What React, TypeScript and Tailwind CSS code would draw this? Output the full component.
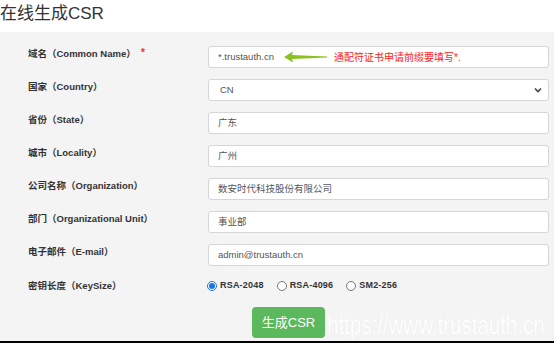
import { useState } from "react";

const LATIN = "font-['Liberation_Sans','Noto_Sans_CJK_SC',sans-serif]";

type Field = {
  label: string;
  value: string;
  kind?: "select";
  required?: boolean;
  hint?: boolean;
};

const fields: Field[] = [
  { label: "域名（Common Name）", value: "*.trustauth.cn", required: true, hint: true },
  { label: "国家（Country）", value: "CN", kind: "select" },
  { label: "省份（State）", value: "广东" },
  { label: "城市（Locality）", value: "广州" },
  { label: "公司名称（Organization）", value: "数安时代科技股份有限公司" },
  { label: "部门（Organizational Unit）", value: "事业部" },
  { label: "电子邮件（E-mail）", value: "admin@trustauth.cn" },
];

function Arrow() {
  return (
    <svg width="44" height="12" viewBox="0 0 44 12" className="shrink-0">
      <path d="M0 6 L9 0.5 L8 4 L43 5.6 L43 6.4 L8 8 L9 11.5 Z" fill="#8cc21f" />
    </svg>
  );
}

function Chevron() {
  return (
    <svg width="8" height="6" viewBox="0 0 8 6">
      <path d="M1 1.5 L4 4.5 L7 1.5" stroke="#444" strokeWidth="1.6" fill="none" />
    </svg>
  );
}

function Radio({ checked, label, onPick }: { checked: boolean; label: string; onPick: () => void }) {
  return (
    <button type="button" onClick={onPick} className="flex items-center gap-[3px]">
      {checked ? (
        <span className="flex h-[10px] w-[10px] items-center justify-center rounded-full border border-[#1a73e8] bg-white">
          <span className="h-[6px] w-[6px] rounded-full bg-[#1a73e8]" />
        </span>
      ) : (
        <span className="h-[10px] w-[10px] rounded-full border border-[#777] bg-white" />
      )}
      <span className="text-[9px] font-bold tracking-[0.2px] text-[#333]">{label}</span>
    </button>
  );
}

export default function App() {
  const [keySize, setKeySize] = useState("RSA-2048");

  return (
    <div className={`h-[343px] w-[554px] overflow-hidden bg-white ${LATIN}`}>
      <h1 className="h-[32px] pt-[2px] text-[17px] leading-[24px] text-[#333]">在线生成CSR</h1>

      <div className="flex h-[309px] flex-col bg-[#f4f4f4] pt-[14px]">
        <div className="flex flex-col gap-[11px]">
          {fields.map((f) => (
            <div key={f.label} className="flex h-[22px] items-start">
              <div className="flex w-[208px] items-start pl-[28px] pt-[1px] text-[9.5px] font-bold leading-[13px] text-[#333]">
                <span>{f.label}</span>
                {f.required ? <span className="ml-[5px] -mt-[1px] text-[11px] text-[#e4393c]">*</span> : null}
              </div>
              <div className="relative flex h-[22px] w-[341px] items-center rounded-[3px] border border-[#d6d6d6] bg-white pl-[9px] pr-[6px] text-[9.5px] text-[#555]">
                {f.kind === "select" ? (
                  <>
                    <span className="pl-[2px]">{f.value}</span>
                    <span className="ml-auto">
                      <Chevron />
                    </span>
                  </>
                ) : (
                  <span>{f.value}</span>
                )}
                {f.hint ? (
                  <span className="ml-[10px] flex items-center gap-[6px]">
                    <Arrow />
                    <span className="text-[10px] text-[#ff2222]">通配符证书申请前缀要填写*.</span>
                  </span>
                ) : null}
              </div>
            </div>
          ))}
        </div>

        <div className="mt-[9px] flex h-[22px] items-center">
          <div className="w-[207px] pl-[28px] text-[9.5px] font-bold text-[#333]">密钥长度（KeySize）</div>
          <div className="flex items-center gap-[13px]">
            {["RSA-2048", "RSA-4096", "SM2-256"].map((k) => (
              <Radio key={k} label={k} checked={keySize === k} onPick={() => setKeySize(k)} />
            ))}
          </div>
        </div>

        <div className="mt-[10px] flex items-end pl-[252px]">
          <button
            type="button"
            className="flex h-[31px] w-[73px] shrink-0 items-center justify-center whitespace-nowrap rounded-[4px] bg-[#5cb85c] text-[13px] text-white"
          >
            生成CSR
          </button>
          <span className="ml-[2px] origin-left scale-x-[0.82] whitespace-nowrap text-[25px] leading-[25px] text-white [text-shadow:0_0_1px_rgba(0,0,0,0.08)]">
            https://www.trustauth.cn
          </span>
        </div>
      </div>

      <div className="h-[2px] bg-black" />
    </div>
  );
}
